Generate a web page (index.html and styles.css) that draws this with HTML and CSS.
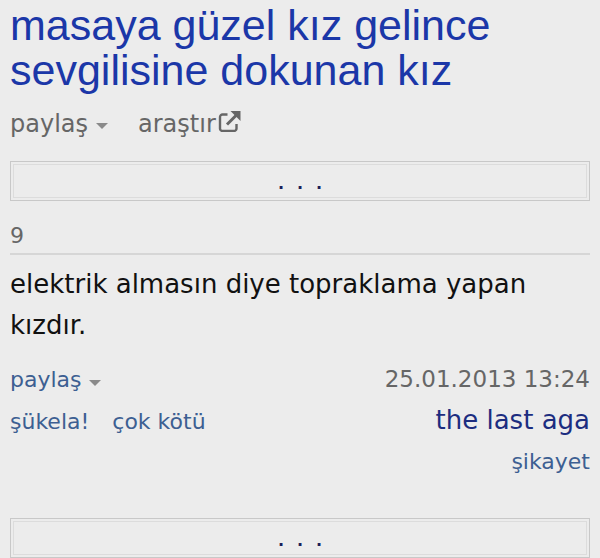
FILE: index.html
```html
<!DOCTYPE html>
<html lang="tr">
<head>
<meta charset="utf-8">
<link rel="stylesheet" href="styles.css">
</head>
<body>
<div class="page">
  <h1 class="title">masaya güzel kız gelince sevgilisine dokunan kız</h1>
  <div class="topic-meta">
    <span class="meta-item">paylaş<span class="caret"></span></span>
    <span class="meta-item">araştır<svg class="ext" viewBox="0 0 24 22" width="25" height="22"><path d="M10 4.5H5A2.5 2.5 0 0 0 2.5 7v11.5A2.5 2.5 0 0 0 5 21h11.5a2.5 2.5 0 0 0 2.5-2.5V14" fill="none" stroke="#666" stroke-width="2.4"/><path d="M9.5 14.5L19.5 4.5" stroke="#666" stroke-width="3" fill="none"/><path d="M13 1h10v10z" fill="#666"/></svg></span>
  </div>
  <div class="more-box"><span class="dots">...</span></div>
  <div class="entry-no">9</div>
  <div class="entry-text">elektrik almasın diye topraklama yapan kızdır.</div>
  <div class="entry-foot">
    <div class="row">
      <span class="link">paylaş<span class="caret"></span></span>
      <span class="date">25.01.2013 13:24</span>
    </div>
    <div class="row">
      <span class="votes"><span class="link">şükela!</span><span class="link">çok kötü</span></span>
      <span class="author">the last aga</span>
    </div>
    <div class="row end">
      <span class="link">şikayet</span>
    </div>
  </div>
  <div class="more-box bottom"><span class="dots">...</span></div>
</div>
</body>
</html>
```
FILE: styles.css
```css
html, body {
  margin: 0;
  padding: 0;
  background: #ececec;
}
.page {
  padding: 3px 10px 0 10px;
  font-family: "DejaVu Sans", Verdana, sans-serif;
}
.title {
  margin: 0;
  font-family: "Liberation Sans", Arial, sans-serif;
  font-weight: normal;
  font-size: 43px;
  line-height: 45px;
  color: #1b37a8;
}
.topic-meta {
  display: flex;
  gap: 30px;
  margin-top: 17px;
  font-size: 24px;
  line-height: 28px;
  color: #666;
}
.meta-item {
  display: inline-flex;
  align-items: center;
}
.caret {
  display: inline-block;
  width: 0;
  height: 0;
  margin-left: 8px;
  margin-top: 3px;
  border-left: 6.5px solid transparent;
  border-right: 6.5px solid transparent;
  border-top: 6px solid #8a8a8a;
}
.ext {
  margin-left: 1px;
  margin-top: -6px;
}
.more-box {
  margin-top: 23px;
  height: 38px;
  border: 1px solid #c8c8c8;
  box-shadow: inset 0 0 0 2px #ececec, inset 0 0 0 3px #dcdcdc;
  display: flex;
  align-items: center;
  justify-content: center;
}
.dots {
  font-size: 16px;
  font-weight: bold;
  color: #1a1f5a;
  letter-spacing: 13px;
  margin-right: -13px;
  line-height: 16px;
  margin-top: 6px;
}
.entry-no {
  margin-top: 22px;
  font-size: 22px;
  line-height: 26px;
  color: #666;
  padding-bottom: 4px;
  border-bottom: 2px solid #d6d6d6;
}
.entry-text {
  margin-top: 9px;
  font-size: 26px;
  line-height: 41px;
  color: #111;
}
.entry-foot {
  margin-top: 13px;
}
.row {
  display: flex;
  justify-content: space-between;
  align-items: baseline;
  height: 41px;
  line-height: 41px;
}
.row.end {
  justify-content: flex-end;
}
.link {
  font-size: 22px;
  color: #3d5f92;
}
.link .caret {
  vertical-align: middle;
  margin-left: 7px;
}
.votes {
  display: flex;
  gap: 23px;
}
.date {
  font-size: 23px;
  color: #666;
}
.author {
  font-size: 26px;
  color: #1c2d80;
}
.bottom {
  margin-top: 36px;
}
```
